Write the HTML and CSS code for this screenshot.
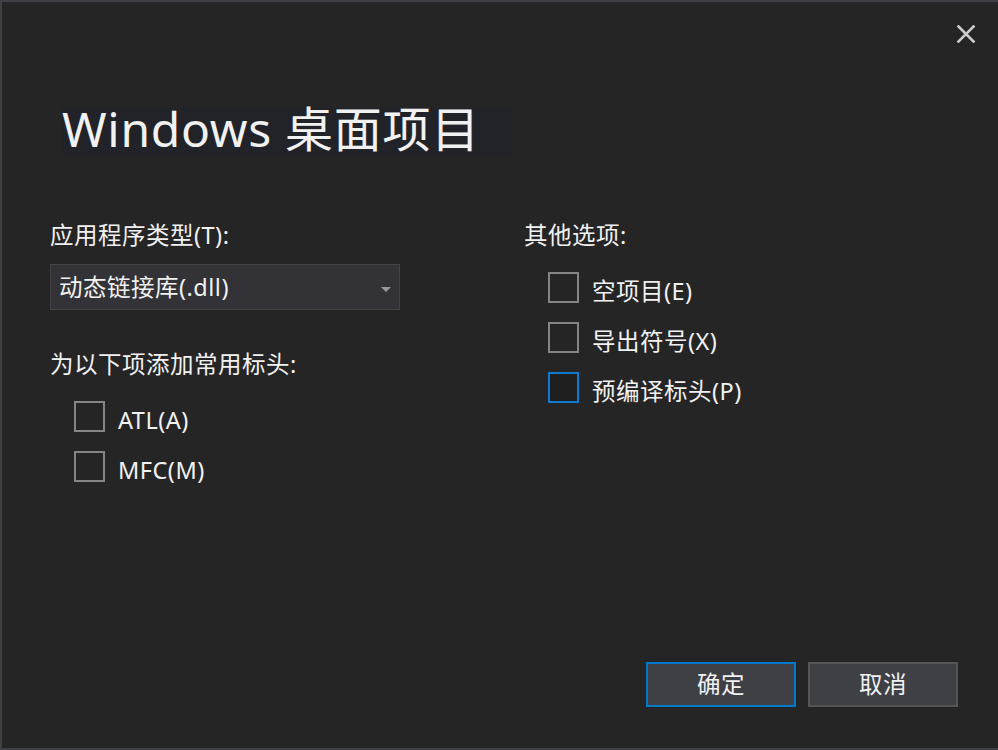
FILE: index.html
```html
<!DOCTYPE html>
<html lang="zh-CN">
<head>
<meta charset="utf-8">
<title>Windows 桌面项目</title>
<link rel="stylesheet" href="styles.css">
</head>
<body>
<div class="dialog">
  <div class="header">
    <button class="close" aria-label="关闭">
      <svg width="20" height="18" viewBox="0 0 20 18"><path d="M2.5 1.5 L17.5 16.5 M17.5 1.5 L2.5 16.5" stroke="#cccccc" stroke-width="2.6" stroke-linecap="square" fill="none"/></svg>
    </button>
  </div>
  <div class="title-row"><h1 class="title">Windows 桌面项目</h1></div>
  <div class="content">
    <div class="col">
      <div class="label">应用程序类型(T):</div>
      <div class="select"><span>动态链接库(.dll)</span><span class="arrow"></span></div>
      <div class="label label-gap">为以下项添加常用标头:</div>
      <div class="checks">
        <label class="check"><span class="box"></span><span class="text">ATL(A)</span></label>
        <label class="check"><span class="box"></span><span class="text">MFC(M)</span></label>
      </div>
    </div>
    <div class="col">
      <div class="label">其他选项:</div>
      <div class="checks">
        <label class="check"><span class="box"></span><span class="text">空项目(E)</span></label>
        <label class="check"><span class="box"></span><span class="text">导出符号(X)</span></label>
        <label class="check"><span class="box box-focus"></span><span class="text">预编译标头(P)</span></label>
      </div>
    </div>
  </div>
  <div class="footer">
    <button class="btn btn-primary">确定</button>
    <button class="btn">取消</button>
  </div>
</div>
</body>
</html>
```
FILE: styles.css
```css
html, body {
  margin: 0;
  background: #252526;
}
.dialog {
  width: 998px;
  height: 750px;
  box-sizing: border-box;
  border-top: 2px solid #3f3f46;
  border-left: 2px solid #3f3f46;
  border-bottom: 2px solid #3f3f46;
  background: #252526;
  display: flex;
  flex-direction: column;
  font-family: "Noto Sans", "Noto Sans CJK SC", sans-serif;
  font-size: 23.5px;
  letter-spacing: 0.5px;
  color: #f1f1f1;
}
.header {
  display: flex;
  justify-content: flex-end;
  padding: 23px 22px 0 0;
}
.close {
  width: 20px;
  height: 18px;
  padding: 0;
  border: 0;
  background: none;
  display: flex;
}
.title-row {
  margin-top: 65px;
  padding-left: 60px;
}
.title {
  margin: 0;
  width: 450px;
  height: 47px;
  box-sizing: border-box;
  padding-bottom: 5px;
  line-height: 42px;
  font-size: 48px;
  font-weight: 400;
  letter-spacing: 0.7px;
  background: #212328;
  white-space: nowrap;
}
.content {
  margin-top: 65px;
  display: grid;
  grid-template-columns: 474px 1fr;
  padding-left: 48px;
}
.label {
  height: 30px;
  line-height: 30px;
  white-space: nowrap;
}
.select {
  margin-top: 14px;
  width: 350px;
  height: 46px;
  box-sizing: border-box;
  border: 1px solid #434346;
  background: #333337;
  display: flex;
  align-items: center;
  justify-content: space-between;
  padding: 0 8px 0 8px;
  line-height: 44px;
}
.arrow {
  width: 0;
  height: 0;
  margin-top: 4px;
  border-left: 5px solid transparent;
  border-right: 5px solid transparent;
  border-top: 5px solid #9a9a9a;
}
.label-gap {
  margin-top: 39px;
}
.checks {
  display: flex;
  flex-direction: column;
  gap: 19px;
  margin-top: 22px;
  padding-left: 24px;
}
.check {
  display: flex;
  align-items: flex-start;
  gap: 13px;
  height: 31px;
}
.box {
  width: 31px;
  height: 31px;
  box-sizing: border-box;
  border: 2px solid #858585;
  background: #252526;
  flex: none;
}
.box-focus {
  border-color: #0e7ad0;
  background: #1f1f20;
}
.text {
  line-height: 31px;
  margin-top: 4px;
  white-space: nowrap;
}
.footer {
  margin-top: auto;
  display: flex;
  justify-content: flex-end;
  gap: 12px;
  padding: 0 40px 41px 0;
}
.btn {
  width: 150px;
  height: 45px;
  box-sizing: border-box;
  border: 2px solid #555555;
  background: #3f3f46;
  color: #f1f1f1;
  font: inherit;
  letter-spacing: inherit;
  line-height: 41px;
  padding: 0;
}
.btn-primary {
  border-color: #007acc;
}
```
